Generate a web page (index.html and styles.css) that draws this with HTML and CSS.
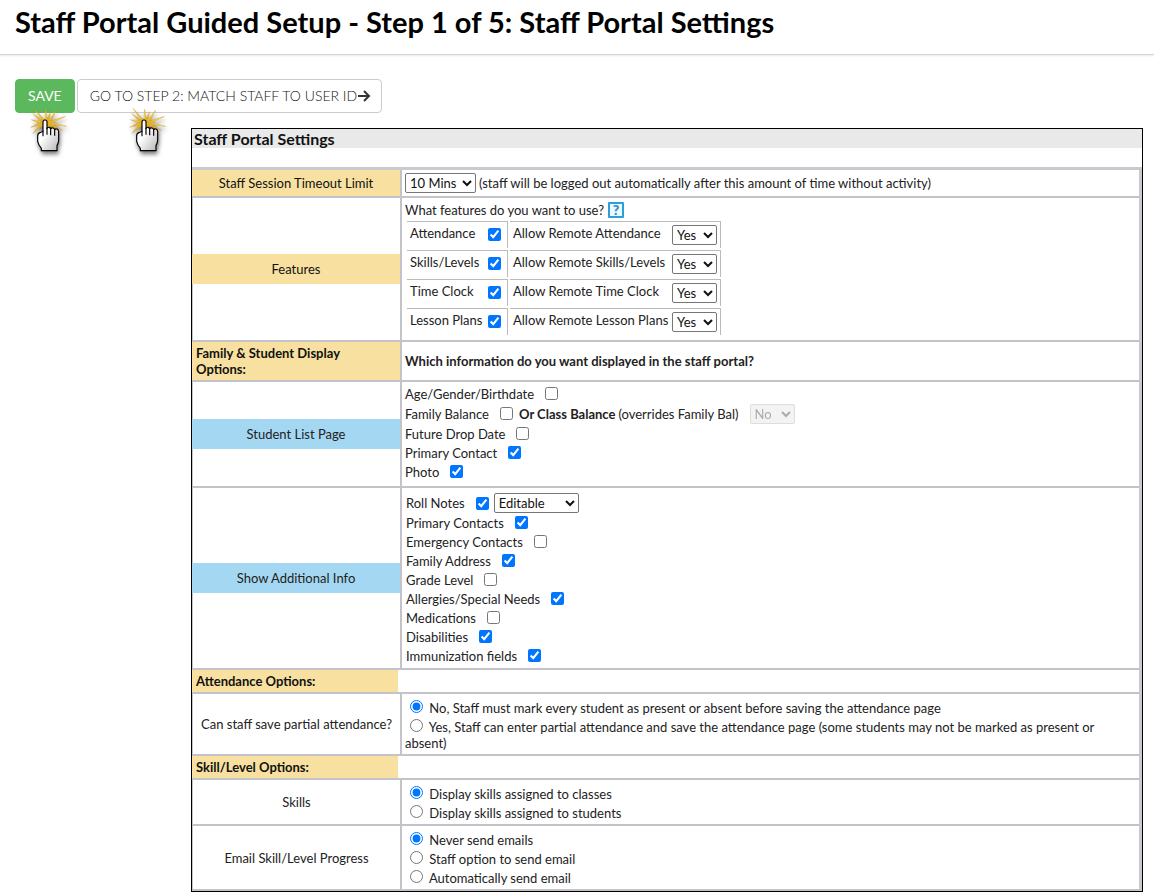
FILE: index.html
```html
<!DOCTYPE html>
<html lang="en">
<head>
<meta charset="utf-8">
<title>Staff Portal Guided Setup</title>
<link rel="stylesheet" href="styles.css">
</head>
<body>
<svg class="defs" aria-hidden="true">
  <defs>
    <linearGradient id="skin" x1="0" y1="0" x2="1" y2="1">
      <stop offset="0.4" stop-color="#fff"/>
      <stop offset="1" stop-color="#b5b5b5"/>
    </linearGradient>
    <symbol id="pointer" viewBox="30 18 120 144">
      <path d="M75 54 77 24 81 54 92 32 87 56 110 27 93 60 136 46 98 65 140 76 98 71 128 88 92 76 78 84 66 76 38 98 60 72 32 79 58 66 34 56 62 60 38 38 66 57 42 22 71 54Z" fill="#e3b02c" stroke="#d09c20" stroke-width="1"/>
      <path d="M76 54 78 34M88 56 104 36M97 62 126 51M98 68 130 74M60 62 44 58M58 70 44 88M66 54 50 34" stroke="#ffd94e" stroke-width="2" fill="none"/>
      <path d="M69 63Q69 57 75 57T81 63V83Q82 78 87 79T92 84Q94 79 99 81T104 86Q107 82 111 84T116 91V119Q115 128 111 133V149H64V142Q56 133 53 121V105Q53 97 60 95L69 91Z" fill="url(#skin)" stroke="#000" stroke-width="3.5" stroke-linejoin="round"/>
      <path d="M69 89V106M81 80V101M92 84V103M104 86V104" stroke="#000" stroke-width="3.5" fill="none"/>
    </symbol>
  </defs>
</svg>
<header class="page-header">
  <h1>Staff Portal Guided Setup - Step 1 of 5: Staff Portal Settings</h1>
</header>
<main>
  <div class="toolbar">
    <div class="action">
      <button class="btn btn-save" type="button">SAVE</button>
      <svg class="hand hand-save" aria-hidden="true"><use href="#pointer"/></svg>
    </div>
    <div class="action">
      <button class="btn btn-next" type="button">GO TO STEP 2: MATCH STAFF TO USER ID<svg class="arrow" viewBox="0 0 14 14" aria-hidden="true"><path d="M1 7h11M7 2l5 5-5 5"/></svg></button>
      <svg class="hand hand-next" aria-hidden="true"><use href="#pointer"/></svg>
    </div>
  </div>
  <section class="panel">
    <h2>Staff Portal Settings</h2>
    <table class="settings">
      <colgroup><col class="col-name"><col></colgroup>
      <tr>
        <th class="yellow"><label for="timeout">Staff Session Timeout Limit</label></th>
        <td><div class="line tall"><select id="timeout" class="w-mins"><option>10 Mins</option></select><span>(staff will be logged out automatically after this amount of time without activity)</span></div></td>
      </tr>
      <tr>
        <th><div class="band yellow">Features</div></th>
        <td class="features">
          <div class="question">What features do you want to use?<button class="help" type="button" aria-label="Help">?</button></div>
          <table class="inner">
            <tr><td><label><span>Attendance</span> <input type="checkbox" checked></label></td><td><label><span>Allow Remote Attendance</span> <select><option>Yes</option></select></label></td></tr>
            <tr><td><label><span>Skills/Levels</span> <input type="checkbox" checked></label></td><td><label><span>Allow Remote Skills/Levels</span> <select><option>Yes</option></select></label></td></tr>
            <tr><td><label><span>Time Clock</span> <input type="checkbox" checked></label></td><td><label><span>Allow Remote Time Clock</span> <select><option>Yes</option></select></label></td></tr>
            <tr><td><label><span>Lesson Plans</span> <input type="checkbox" checked></label></td><td><label><span>Allow Remote Lesson Plans</span> <select><option>Yes</option></select></label></td></tr>
          </table>
        </td>
      </tr>
      <tr>
        <th class="yellow heading">Family &amp; Student Display Options:</th>
        <td><strong>Which information do you want displayed in the staff portal?</strong></td>
      </tr>
      <tr>
        <th><div class="band blue">Student List Page</div></th>
        <td class="list-page">
          <div class="line"><label>Age/Gender/Birthdate <input type="checkbox"></label></div>
          <div class="line tall"><label>Family Balance <input type="checkbox"></label><label class="class-balance" for="classbal"><strong>Or Class Balance</strong> (overrides Family Bal)</label><select id="classbal" disabled><option>No</option></select></div>
          <div class="line"><label>Future Drop Date <input type="checkbox"></label></div>
          <div class="line"><label>Primary Contact <input type="checkbox" checked></label></div>
          <div class="line"><label>Photo <input type="checkbox" checked></label></div>
        </td>
      </tr>
      <tr>
        <th><div class="band blue">Show Additional Info</div></th>
        <td class="info">
          <div class="line tall"><label>Roll Notes <input type="checkbox" checked></label><select class="w-edit" aria-label="Roll Notes access"><option>Editable</option></select></div>
          <div class="line"><label>Primary Contacts <input type="checkbox" checked></label></div>
          <div class="line"><label>Emergency Contacts <input type="checkbox"></label></div>
          <div class="line"><label>Family Address <input type="checkbox" checked></label></div>
          <div class="line"><label>Grade Level <input type="checkbox"></label></div>
          <div class="line"><label>Allergies/Special Needs <input type="checkbox" checked></label></div>
          <div class="line"><label>Medications <input type="checkbox"></label></div>
          <div class="line"><label>Disabilities <input type="checkbox" checked></label></div>
          <div class="line"><label>Immunization fields <input type="checkbox" checked></label></div>
        </td>
      </tr>
      <tr><th class="section" colspan="2"><div class="yellow">Attendance Options:</div></th></tr>
      <tr>
        <th>Can staff save partial attendance?</th>
        <td class="radios">
          <label><input type="radio" name="partial" checked> No, Staff must mark every student as present or absent before saving the attendance page</label>
          <label><input type="radio" name="partial"> Yes, Staff can enter partial attendance and save the attendance page (some students may not be marked as present or absent)</label>
        </td>
      </tr>
      <tr><th class="section" colspan="2"><div class="yellow">Skill/Level Options:</div></th></tr>
      <tr>
        <th>Skills</th>
        <td class="radios">
          <label><input type="radio" name="skills" checked> Display skills assigned to classes</label>
          <label><input type="radio" name="skills"> Display skills assigned to students</label>
        </td>
      </tr>
      <tr>
        <th>Email Skill/Level Progress</th>
        <td class="radios">
          <label><input type="radio" name="email" checked> Never send emails</label>
          <label><input type="radio" name="email"> Staff option to send email</label>
          <label><input type="radio" name="email"> Automatically send email</label>
        </td>
      </tr>
    </table>
  </section>
</main>
</body>
</html>
```

FILE: styles.css
```css
* { box-sizing: border-box; }
body {
  margin: 0;
  background: #fff;
  color: #222;
  font: 13px/16px Lato, sans-serif;
}
.defs { position: absolute; width: 0; height: 0; }
.page-header {
  padding: 4px 15px 14px;
  border-bottom: 1px solid #d6d6d6;
  box-shadow: 0 1px 2px #e8e8e8;
}
h1 { margin: 0; color: #000; font-size: 29px; line-height: 36px; font-weight: 700; }
main { padding: 24px 11px 4px 15px; }
.toolbar { display: flex; gap: 2px; }
.action { position: relative; }
.btn {
  display: flex;
  align-items: center;
  height: 34px;
  padding: 0 12px;
  border: 1px solid #ccc;
  border-radius: 4px;
  background: #fff;
  color: #333;
  font: 14px/20px Lato, sans-serif;
}
.btn-save { background: #5cb85c; border-color: #5cb85c; color: #fff; }
.btn-next { padding-right: 10px; color: #111; font-weight: 300; }
.arrow { width: 14px; height: 14px; fill: none; stroke: #333; stroke-width: 2; }
.hand { position: absolute; top: 28px; width: 40px; height: 48px; filter: drop-shadow(1px 3px 2px #0008); pointer-events: none; }
.hand-save { left: 15px; }
.hand-next { left: 52px; }
.panel { margin: 15px 0 0 176px; border: 1px solid #000; }
h2 {
  margin: 0 0 19px;
  padding: 1px 2px 0;
  background: #e9e9e9;
  color: #111;
  font-size: 16px;
  line-height: 18px;
  font-weight: 700;
}
.settings {
  width: 100%;
  border-spacing: 0;
  table-layout: fixed;
  border-top: 3px solid #c9c9cf;
  border-right: 3px solid #c9c9cf;
}
.col-name { width: 208px; }
.settings th { padding: 0; font-weight: 400; text-align: center; border-bottom: 2px solid #c3c3c9; }
.settings th:not(.yellow, .section) { border-left: 1px solid #c3c3c9; }
.settings > tbody > tr > td { padding: 3px; border-left: 2px solid #c3c3c9; border-bottom: 2px solid #c3c3c9; }
.settings .yellow { background: #f8e1a0; color: #111; }
.blue { background: #a4d8f2; }
.band { line-height: 30px; margin-left: -1px; }
.settings .heading { padding: 3px 20px 3px 4px; text-align: left; font-weight: 700; }
.settings .section { text-align: left; font-weight: 700; }
.section div { width: 206px; padding: 0 4px; line-height: 22px; }
.line { display: flex; align-items: center; min-height: 19px; }
.line label { display: flex; align-items: center; gap: 11px; }
.line .class-balance { gap: 3px; padding: 0 8px 0 3px; }
.tall { min-height: 20px; gap: 3px; }
input { width: 13px; height: 13px; margin: 0; accent-color: #0075ff; }
select {
  width: 45px;
  height: 20px;
  padding: 0;
  border: 1px solid #767676;
  border-radius: 2px;
  background: #fff;
  color: #111;
  font: 13px Lato, sans-serif;
}
select:disabled { background: #eee; border-color: #d0d0d0; color: #888; }
.w-mins { width: 71px; }
.w-edit { width: 85px; margin-left: 2px; }
.question { display: flex; align-items: center; height: 18px; gap: 4px; }
.help {
  width: 16px;
  height: 16px;
  padding: 0;
  border: 2px solid #2a9fd8;
  border-radius: 1px;
  background: #eef8fd;
  color: #1b8fd0;
  font: 900 14px/12px Lato, sans-serif;
}
.inner { border-spacing: 2px; }
.inner td { height: 27px; padding: 0 3px; border-top: 1px solid #bbb; border-right: 1px solid #bbb; }
.inner td:first-child { width: 101px; padding: 0 6px 2px 3px; }
.inner td:last-child { width: 211px; }
.inner label { display: flex; align-items: center; justify-content: space-between; white-space: nowrap; }
.inner span { padding-bottom: 4px; }
.inner td:first-child span { padding-bottom: 2px; }
.settings .list-page { padding: 2px 3px 5px; }
.list-page .tall { min-height: 21px; }
.settings .info { padding: 5px 4px 3px; }
.settings > tbody > tr > td.radios { padding: 3px; }
.radios label { display: block; }
.radios input { margin: 3px 3px 0 5px; vertical-align: baseline; }
```
